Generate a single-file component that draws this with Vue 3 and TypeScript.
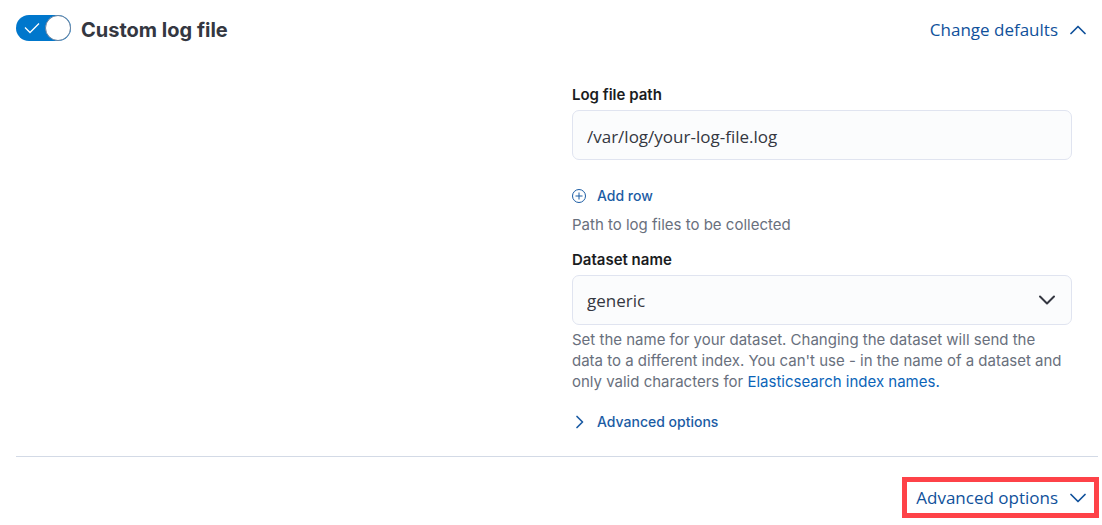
<script setup lang="ts">
import { ref } from 'vue'

const enabled = ref(true)
const paths = ref<string[]>(['/var/log/your-log-file.log'])
const dataset = ref('generic')

function addRow(): void {
  paths.value.push('')
}
</script>

<template>
  <main class="panel">
    <header class="header">
      <label class="switch">
        <span class="track">
          <input v-model="enabled" type="checkbox" role="switch" class="switch-input" />
          <svg v-if="enabled" class="tick" width="16" height="12" viewBox="0 0 16 12" aria-hidden="true">
            <path d="M1 5.5 6 10.5 15 1.5" />
          </svg>
        </span>
        <span class="title">Custom log file</span>
      </label>
      <button type="button" class="link-button large">
        Change defaults
        <svg class="chevron" width="16" height="10" viewBox="0 0 16 10" aria-hidden="true">
          <path d="M1 8.5 8 1.5 15 8.5" />
        </svg>
      </button>
    </header>

    <section class="body">
      <div class="fields">
        <label class="label" for="log-path-0">Log file path</label>
        <div class="rows">
          <input
            v-for="(_, i) in paths"
            :id="`log-path-${i}`"
            :key="i"
            v-model="paths[i]"
            type="text"
            class="control"
          />
        </div>
        <button type="button" class="link-button small add" @click="addRow">
          <svg class="plus" width="15" height="15" viewBox="0 0 15 15" aria-hidden="true">
            <circle cx="7" cy="7" r="6.5" />
            <path d="M7 3.5v7M3.5 7h7" />
          </svg>
          Add row
        </button>
        <p class="help path-help">Path to log files to be collected</p>

        <label class="label" for="dataset">Dataset name</label>
        <div class="select-wrap">
          <select id="dataset" v-model="dataset" class="control">
            <option value="generic">generic</option>
          </select>
          <svg class="chevron select-arrow" width="18" height="10" viewBox="0 0 18 10" aria-hidden="true">
            <path d="M2 1.5 9 8.5 16 1.5" />
          </svg>
        </div>
        <p class="help">
          Set the name for your dataset. Changing the dataset will send the data to a different index.
          You can't use - in the name of a dataset and only valid characters for
          <a href="#index-names">Elasticsearch index names.</a>
        </p>
        <button type="button" class="link-button small advanced">
          <svg class="chevron side" width="15" height="14" viewBox="0 0 15 14" aria-hidden="true">
            <path d="M5 1.5 10.5 7 5 12.5" />
          </svg>
          Advanced options
        </button>
      </div>
    </section>

    <footer class="footer">
      <button type="button" class="link-button large highlighted">
        Advanced options
        <svg class="chevron" width="16" height="10" viewBox="0 0 16 10" aria-hidden="true">
          <path d="M1 1.5 8 8.5 15 1.5" />
        </svg>
      </button>
    </footer>
  </main>
</template>

<style>
body {
  margin: 0;
  background: #fff;
}
</style>

<style scoped>
.panel {
  box-sizing: border-box;
  padding: 14px 4px 0 16px;
  font-family: Inter, "Liberation Sans", sans-serif;
  color: #343741;
}
.header {
  display: flex;
  justify-content: space-between;
  align-items: center;
  height: 32px;
  padding-right: 12px;
}
.switch {
  display: flex;
  align-items: center;
  gap: 10px;
  cursor: pointer;
}
.track {
  display: grid;
  align-items: center;
  margin-bottom: 4px;
}
.track > * {
  grid-area: 1 / 1;
}
.switch-input {
  appearance: none;
  display: flex;
  width: 55px;
  height: 26px;
  margin: 0;
  border-radius: 13px;
  background: #98a2b3;
  cursor: pointer;
}
.switch-input::before {
  content: "";
  box-sizing: border-box;
  width: 26px;
  height: 26px;
  border: 1px solid #69829f;
  border-radius: 50%;
  background: #fff;
}
.switch-input:checked {
  justify-content: flex-end;
  background: #0077cc;
}
.tick {
  margin-left: 8px;
  pointer-events: none;
  fill: none;
  stroke: #fff;
  stroke-width: 1.3;
}
.title {
  font-size: 20px;
  line-height: 32px;
  font-weight: 700;
}
.link-button {
  display: flex;
  align-items: center;
  padding: 0;
  border: 0;
  background: none;
  color: #1b5ca4;
  font-weight: 500;
  cursor: pointer;
}
.large {
  gap: 12px;
  color: #10519b;
  font-family: "Open Sans", "Noto Sans", sans-serif;
  font-size: 17px;
  line-height: 24px;
}
.small {
  gap: 10px;
  font-family: Inter, "Liberation Sans", sans-serif;
  font-size: 14px;
  line-height: 20px;
}
.chevron {
  fill: none;
  stroke: currentColor;
  stroke-width: 1.7;
  stroke-linecap: round;
  stroke-linejoin: round;
}
.plus {
  fill: none;
  stroke: currentColor;
  stroke-width: 1;
}
.body {
  display: grid;
  grid-template-columns: 1fr 1fr;
  column-gap: 56px;
  padding: 38px 26px 24px 0;
}
.fields {
  grid-column: 2;
}
.label {
  display: block;
  margin-bottom: 5px;
  color: #1a1c21;
  font-size: 15px;
  line-height: 21px;
  font-weight: 600;
}
.rows {
  display: grid;
  gap: 8px;
}
.control {
  appearance: none;
  box-sizing: border-box;
  display: block;
  width: 100%;
  height: 50px;
  padding: 2px 14px 0;
  border: 1px solid #e0e4f0;
  border-radius: 7px;
  background: #fbfcfd;
  color: #343741;
  font-family: "Open Sans", "Noto Sans", sans-serif;
  font-size: 17px;
}
select.control {
  padding-top: 0;
}
.add {
  margin-top: 26px;
}
.help {
  margin: 4px 0 0;
  padding-right: 6px;
  color: #69707d;
  font-size: 15px;
  line-height: 21px;
}
.path-help {
  margin: 8px 0 14px;
}
.help a {
  display: inline-block;
  color: #0b64b8;
  text-decoration: none;
}
.select-wrap {
  display: grid;
  align-items: center;
}
.select-wrap > * {
  grid-area: 1 / 1;
}
.select-arrow {
  justify-self: end;
  margin-right: 16px;
  color: #343741;
  stroke-width: 2;
  pointer-events: none;
}
.advanced {
  margin-top: 20px;
}
.footer {
  display: flex;
  justify-content: flex-end;
  padding-top: 20px;
  border-top: 1px solid #d3dae6;
}
.highlighted {
  margin-right: -1px;
  padding: 4px 8px 3px 9px;
  border: 5px solid #fe4248;
}
</style>
